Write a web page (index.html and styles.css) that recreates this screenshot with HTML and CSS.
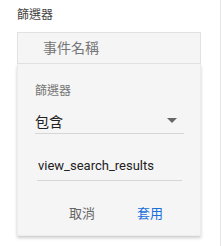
FILE: index.html
```html
<!DOCTYPE html>
<html lang="zh-Hant">
<head>
  <meta charset="UTF-8">
  <title>篩選器</title>
  <link rel="stylesheet" href="styles.css">
</head>
<body>
  <div class="panel">
    <div class="title">篩選器</div>
    <div class="field">事件名稱</div>
    <div class="menu">
      <div class="menu-label">篩選器</div>
      <div class="select">
        <span>包含</span>
        <span class="arrow"></span>
      </div>
      <div class="input">view_search_results</div>
      <div class="actions">
        <a class="btn cancel" href="javascript:;">取消</a>
        <a class="btn apply" href="javascript:;">套用</a>
      </div>
    </div>
  </div>
</body>
</html>
```
FILE: styles.css
```css
*{
  margin: 0;
  padding: 0;
  box-sizing: border-box;
}
body{
  background: #fff;
  font-family: Roboto, "Noto Sans CJK TC", sans-serif;
}
.panel{
  width: 221px;
  height: 246px;
  padding: 7px 0 0 17px;
  border-right: 1px solid #e6e6e6;
}
.title{
  font-size: 12px;
  line-height: 16px;
  color: #444;
}
.field{
  width: 184px;
  height: 32px;
  margin-top: 9px;
  padding-left: 25px;
  background: #f5f5f5;
  border: 1px solid #e2e2e2;
  font-size: 14px;
  line-height: 30px;
  color: #757575;
}
.menu{
  width: 184px;
  height: 172px;
  padding: 19px 16px 0 17px;
  background: #f5f5f5;
  border: 1px solid #ececec;
  border-top: none;
  box-shadow: 0 2px 3px rgba(0,0,0,.2);
}
.menu-label{
  font-size: 12px;
  line-height: 16px;
  color: #777;
}
.select{
  display: flex;
  justify-content: space-between;
  align-items: center;
  height: 26px;
  margin-top: 9px;
  border-bottom: 1px solid #d6d6d6;
  font-size: 14px;
  color: #222;
}
.select .arrow{
  width: 0;
  height: 0;
  margin-right: 7px;
  border-left: 5px solid transparent;
  border-right: 5px solid transparent;
  border-top: 5px solid #666;
}
.input{
  height: 28px;
  margin: 19px 2px 0 2px;
  padding-left: 1px;
  border-bottom: 1px solid #d6d6d6;
  font-size: 13px;
  line-height: 26px;
  color: #222;
}
.actions{
  display: flex;
  gap: 42px;
  margin-top: 24px;
  padding-left: 34px;
}
.btn{
  font-size: 13px;
  line-height: 18px;
  text-decoration: none;
  color: #666;
}
.btn.apply{
  color: #1a6fdb;
}
```
